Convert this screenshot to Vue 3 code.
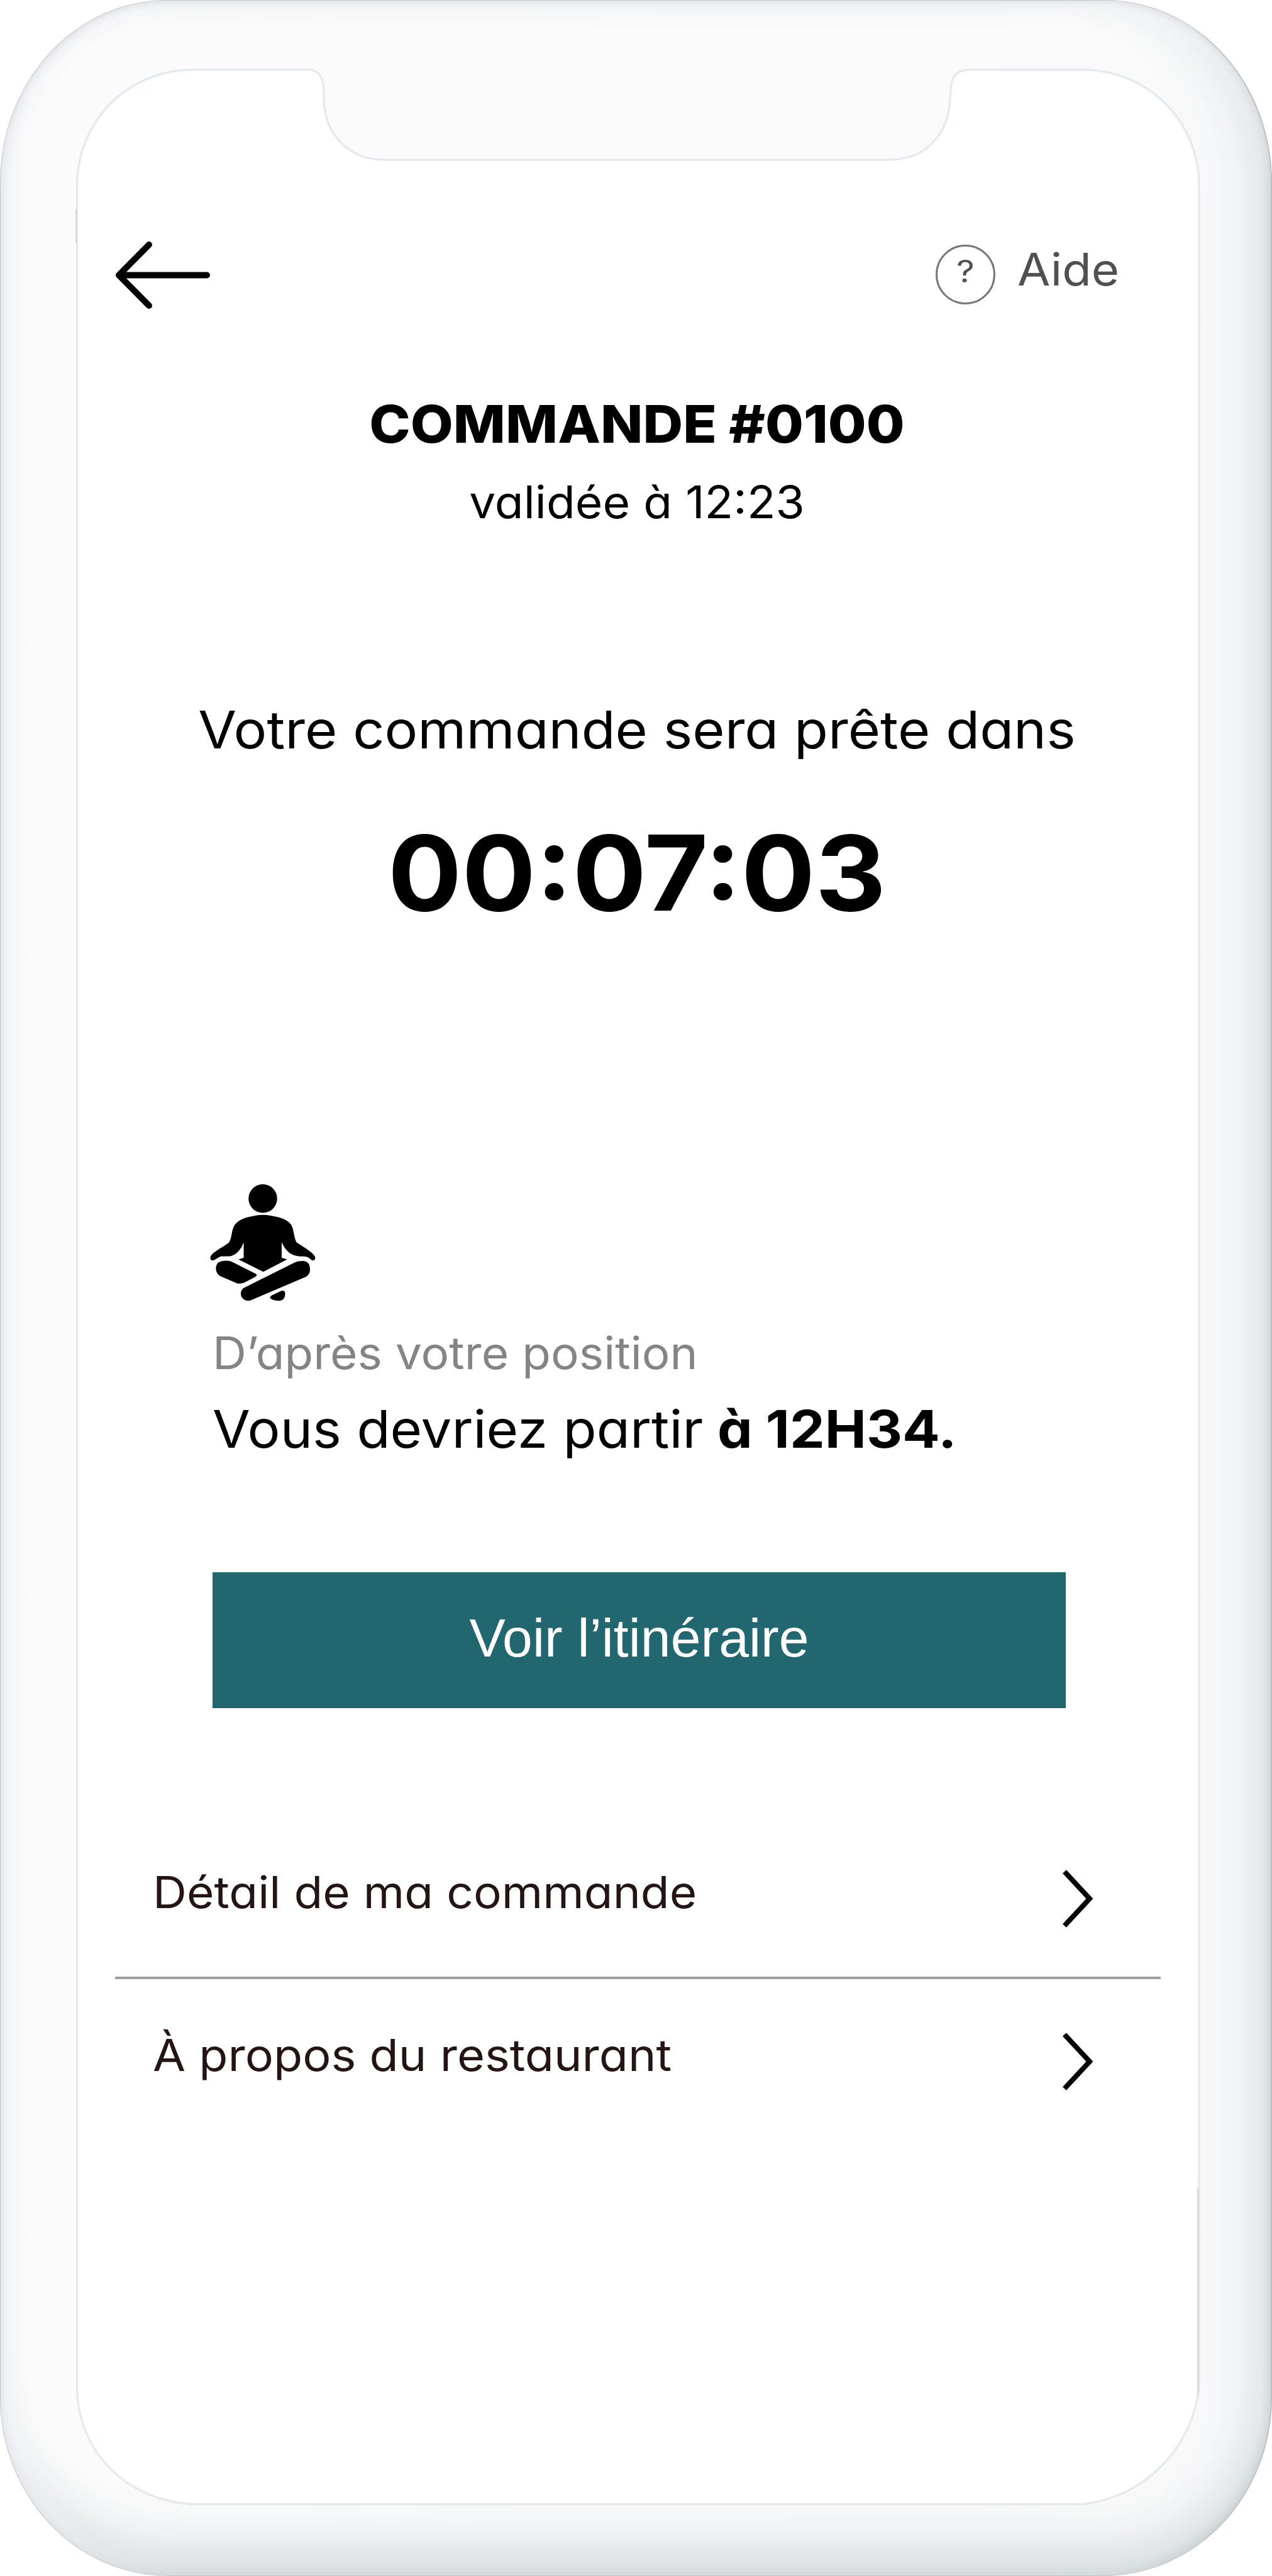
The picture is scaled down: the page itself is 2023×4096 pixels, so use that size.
<script setup>
const links = [
  { label: 'Détail de ma commande', cls: 'link-detail' },
  { label: 'À propos du restaurant', cls: 'link-about' },
]
</script>

<template>
  <div class="phone">
    <svg class="bezel" viewBox="0 0 2023 4096" aria-hidden="true">
      <path
        class="glass"
        d="M307 111H490Q515 111 515 146V154C515 213 553 254 612 254H1414C1473 254 1510 213 1511 154L1512 146Q1512 111 1540 111H1722C1826 111 1907 192 1907 296V3797C1895 3895 1820 3970 1722 3982H307C203 3976 124 3901 122.500 3797V296C122.500 192 203 111 307 111Z"
      />
      <path class="seam" d="M121 333V386M1905 3478V3808" />
    </svg>

    <main class="screen">
      <header class="topbar">
        <svg class="back" viewBox="0 0 156 108" aria-label="Retour">
          <path d="M55 5L7 53.500L55 102M7 53.500H147" />
        </svg>
        <div class="help">
          <span class="help-mark"><span class="help-glyph">?</span></span>
          <span class="help-label">Aide</span>
        </div>
      </header>

      <h1 class="order">COMMANDE #0100</h1>
      <p class="validated">validée à 12:23</p>
      <p class="ready">Votre commande sera prête dans</p>
      <p class="timer">00:07:03</p>

      <section class="departure">
        <svg class="person" viewBox="192 186 700 772" aria-hidden="true">
          <circle cx="542" cy="277" r="95" />
          <path
            d="M485 391Q542 380 600 391C660 400 710 418 731 452C751 490 746 531 766 568C804 594 850 618 880 650Q896 670 886 683Q874 694 858 679Q840 659 800 661C750 660 710 647 676 585L667 566V670L704 681L545 763L380 681L415 670V566C403 605 374 647 328 660L262 661L226 681Q208 695 195 681Q188 663 207 645C237 616 281 598 318 568C339 531 332 490 354 454C378 416 430 400 485 391Z"
          />
          <path
            d="M247 700Q283 681 332 694L498 777Q507 789 492 796L435 827Q405 847 370 839L263 793C222 773 224 721 247 700Z"
          />
          <path
            d="M415 870L755 700C795 684 839 688 849 715C861 750 857 780 826 797L477 945C447 963 420 955 405 935C389 912 395 883 415 870Z"
          />
          <path d="M599 920L665 889Q691 883 690 908C690 940 674 958 638 955Q598 951 588 934Z" />
        </svg>
        <p class="position">D’après votre position</p>
        <p class="leave">
          <span class="leave-text">Vous devriez partir</span>
          <strong>à 12H34.</strong>
        </p>
        <button class="route" type="button">Voir l’itinéraire</button>
      </section>

      <nav class="links">
        <a v-for="link in links" :key="link.label" class="link">
          <span class="link-label" :class="link.cls">{{ link.label }}</span>
          <svg class="chevron" viewBox="0 0 50 92" aria-hidden="true">
            <path d="M4 3L44 46L4 89" />
          </svg>
        </a>
      </nav>
    </main>
  </div>
</template>

<style>
body {
  margin: 0;
  background: #fff;
}
</style>

<style scoped>
.phone {
  position: relative;
  box-sizing: border-box;
  width: 2023px;
  height: 4096px;
  border: 1px solid #c3c7c9;
  border-right: 2px solid #b9bec0;
  border-radius: 266px 266px 268px 268px / 290px 290px 284px 284px;
  background: linear-gradient(90deg, #fbfbfb 0, #fafafa 85%, #f8f8f9 100%);
  box-shadow:
    inset 10px 0 14px -6px #e3e5e8,
    inset 0 8px 12px -5px #dfe1e4,
    inset -7px -6px 16px -4px #c9ced0,
    inset 34px 0 40px -16px #f3f4f7,
    inset 0 30px 40px -14px #f2f3f5,
    inset -56px 0 60px -30px #dfe4e6,
    inset 0 -64px 70px -35px #d5dadc,
    inset -110px 0 80px -40px #f2f4f6,
    inset 0 -120px 80px -40px #eff1f3;
  font-family: Inter, 'Open Sans', sans-serif;
  font-feature-settings: 'cv11' 1;
  color: #000;
}

.bezel {
  position: absolute;
  left: -1px;
  top: -1px;
  width: 2023px;
  height: 4096px;
}
.glass {
  fill: #fff;
  stroke: #e4eaed;
  stroke-width: 3.5;
}
.seam {
  fill: none;
  stroke: #d3d6d8;
  stroke-width: 2;
}

.screen {
  position: relative;
  display: flex;
  flex-direction: column;
  padding: 387px 177px 0 181px;
}
p,
h1 {
  margin: 0;
  white-space: nowrap;
}

.topbar {
  display: flex;
  justify-content: space-between;
  align-items: center;
  height: 100px;
}
.back {
  width: 156px;
  height: 108px;
}
.back path {
  fill: none;
  stroke: #000;
  stroke-width: 10;
  stroke-linecap: round;
  stroke-linejoin: round;
}
.help {
  display: flex;
  align-items: center;
  width: 356px;
  color: #505050;
}
.help-mark {
  box-sizing: border-box;
  width: 95px;
  height: 95px;
  margin-bottom: 4px;
  border: 3px solid #777;
  border-radius: 50%;
  font-size: 49px;
  line-height: 80px;
  text-align: center;
}
.help-glyph {
  display: inline-block;
  transform: scaleX(1.15);
}
.help-label {
  margin-left: 35px;
  padding-bottom: 20px;
  font-size: 71px;
  line-height: 90px;
  transform: scaleX(1.07);
  transform-origin: left;
}

.order,
.validated,
.ready,
.timer {
  text-align: center;
}
.order {
  margin-top: 136px;
  font-size: 83px;
  font-weight: 800;
  line-height: 100px;
  transform: scaleX(1.062);
}
.validated {
  margin-top: 24px;
  font-size: 71px;
  line-height: 100px;
  transform: scaleX(1.055);
}
.ready {
  margin-top: 262px;
  font-size: 82.5px;
  line-height: 100px;
  transform: scaleX(1.068);
}
.timer {
  margin-top: 98px;
  font-size: 166px;
  font-weight: 700;
  line-height: 160px;
  transform: scaleX(1.052);
}

.departure {
  display: flex;
  flex-direction: column;
  align-items: flex-start;
  margin-top: 416px;
  padding-left: 156px;
}
.person {
  width: 168px;
  height: 185px;
  margin-left: -4px;
  overflow: visible;
}
.position {
  margin-top: 32px;
  font-size: 71px;
  line-height: 100px;
  color: #848484;
  transform: scaleX(1.052);
  transform-origin: left;
}
.leave {
  display: flex;
  margin-top: 21px;
  font-size: 82.4px;
  line-height: 100px;
}
.leave-text {
  transform: scaleX(1.055);
  transform-origin: left;
}
.leave strong {
  margin-left: 63px;
  font-weight: 700;
  transform: scaleX(1.075);
  transform-origin: left;
}
.route {
  width: 1357px;
  height: 216px;
  margin-top: 178px;
  padding: 0 0 8px;
  border: 0;
  background: #226670;
  color: #fff;
  font-family: 'Liberation Sans', Arial, sans-serif;
  font-size: 86px;
}

.links {
  margin: 178px -2px 0 1px;
}
.link {
  display: flex;
  justify-content: space-between;
  align-items: center;
  box-sizing: border-box;
  height: 249px;
  padding: 0 107px 0 60px;
}
.link + .link {
  height: 266px;
  border-top: 4px solid #9f9f9f;
}
.link-label {
  padding-bottom: 20px;
  font-size: 70.5px;
  line-height: 100px;
  color: #241414;
  transform-origin: left;
}
.link-detail {
  transform: scaleX(1.061);
}
.link-about {
  transform: scaleX(1.071);
}
.chevron {
  width: 50px;
  height: 92px;
}
.chevron path {
  fill: none;
  stroke: #000;
  stroke-width: 8;
}
</style>
